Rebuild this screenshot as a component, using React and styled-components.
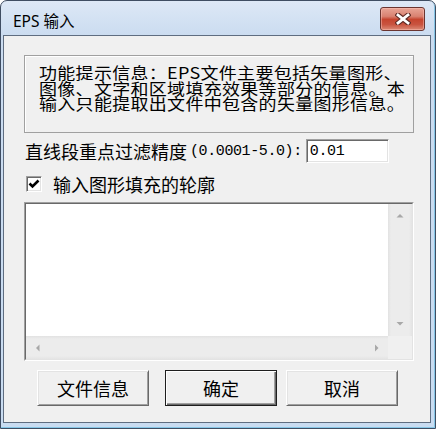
import React from "react";
import styled, { createGlobalStyle } from "styled-components";

const Global = createGlobalStyle`
  html, body { margin: 0; padding: 0; background: #ffffff; }
  body { font-family: "Noto Sans CJK SC", "Noto Sans", sans-serif; color: #000; }
`;

const Window = styled.div`
  box-sizing: border-box;
  width: 436px;
  height: 429px;
  display: flex;
  flex-direction: column;
  padding: 0 4px 5px 2px;
  border: 1px solid #3f4d62;
  border-radius: 7px 7px 0 0;
  background: linear-gradient(to bottom, #dde8f6 0px, #cbdcf0 34px, #c9dcf1 100%);
  box-shadow: inset -1px -1px 0 #86c6e6;
`;

const TitleBar = styled.div`
  height: 34px;
  display: flex;
  align-items: flex-start;
  justify-content: space-between;
  padding: 0 6px 0 10px;
`;

const Title = styled.div`
  margin-top: 10px;
  font-family: "Noto Sans", "Noto Sans CJK SC", sans-serif;
  font-size: 15.5px;
  line-height: 20px;
  color: #000;
`;

const CloseButton = styled.div`
  box-sizing: border-box;
  margin-top: 6px;
  width: 45px;
  height: 24px;
  border: 1px solid #6a3530;
  border-radius: 3px;
  background: linear-gradient(
    to bottom,
    #e8a596 0%,
    #d98271 38%,
    #c6452f 52%,
    #c95440 75%,
    #dc8b77 100%
  );
  box-shadow: inset 0 0 0 1px rgba(255, 200, 190, 0.45);
  display: flex;
  align-items: center;
  justify-content: center;
`;

const Client = styled.div`
  flex: 1;
  display: flex;
  flex-direction: column;
  background: #f0f0f0;
  border: 1px solid #5f6d80;
`;

const InfoBox = styled.div`
  box-sizing: border-box;
  width: 390px;
  height: 78px;
  margin: 19px 0 0 20px;
  border: 1px solid #a0a0a0;
  box-shadow: inset 1px 1px 0 #ffffff;
  padding: 8px 0 0 14px;
`;

const InfoText = styled.div`
  transform: scaleY(0.86);
  transform-origin: 0 0;
`;

const InfoLine = styled.div`
  font-size: 18px;
  line-height: 18.5px;
  letter-spacing: 0.3px;
  white-space: nowrap;
`;

const FieldRow = styled.div`
  display: flex;
  align-items: center;
  height: 24px;
  margin: 6px 0 0 21px;
`;

const Label = styled.span`
  font-size: 18px;
  line-height: 20px;
  white-space: nowrap;
`;

const MonoText = styled.span`
  margin-left: 3px;
  font-family: "Liberation Mono", "DejaVu Sans Mono", monospace;
  font-size: 15px;
  letter-spacing: -0.4px;
  white-space: nowrap;
`;

const Edit = styled.input`
  box-sizing: border-box;
  margin-left: 4px;
  width: 83px;
  height: 24px;
  padding: 0 0 0 3px;
  border: 1px solid;
  border-color: #a0a0a0 #ffffff #ffffff #a0a0a0;
  box-shadow: inset 1px 1px 0 #696969, inset -1px -1px 0 #e3e3e3;
  background: #ffffff;
  font-family: "Liberation Mono", "DejaVu Sans Mono", monospace;
  font-size: 15px;
  letter-spacing: -0.4px;
  color: #000;
  outline: none;
`;

const CheckRow = styled.div`
  display: flex;
  align-items: center;
  height: 22px;
  margin: 10px 0 0 22px;
`;

const CheckBox = styled.div`
  box-sizing: border-box;
  width: 16px;
  height: 16px;
  border: 1px solid;
  border-color: #a0a0a0 #ffffff #ffffff #a0a0a0;
  box-shadow: inset 1px 1px 0 #696969, inset -1px -1px 0 #e3e3e3;
  background: #ffffff;
  display: flex;
  align-items: center;
  justify-content: center;
`;

const CheckLabel = styled.span`
  margin-left: 11px;
  font-size: 18px;
  line-height: 20px;
`;

const ListFrame = styled.div`
  box-sizing: border-box;
  width: 390px;
  height: 159px;
  margin: 7px 0 0 20px;
  border: 1px solid;
  border-color: #a0a0a0 #ffffff #ffffff #a0a0a0;
`;

const ListInner = styled.div`
  box-sizing: border-box;
  width: 100%;
  height: 100%;
  border: 1px solid;
  border-color: #696969 #e3e3e3 #e3e3e3 #696969;
  display: grid;
  grid-template-columns: 1fr 24px;
  grid-template-rows: 1fr 23px;
`;

const ListArea = styled.div`
  background: #ffffff;
`;

const VScroll = styled.div`
  display: flex;
  flex-direction: column;
  justify-content: space-between;
  background: linear-gradient(to right, #e2e2e2 0, #ececec 3px, #ececec 21px, #e4e4e4 100%);
`;

const HScroll = styled.div`
  display: flex;
  justify-content: space-between;
  background: linear-gradient(to bottom, #e2e2e2 0, #ececec 3px, #ececec 20px, #e4e4e4 100%);
`;

const ScrollArrow = styled.div`
  width: ${(p) => (p.$h ? "23px" : "24px")};
  height: ${(p) => (p.$h ? "23px" : "24px")};
  display: flex;
  align-items: center;
  justify-content: center;
`;

const Corner = styled.div`
  background: #f0f0f0;
`;

const ButtonRow = styled.div`
  display: flex;
  margin: 9px 0 0 33px;
`;

const Button = styled.div`
  box-sizing: border-box;
  width: 112px;
  height: 36px;
  margin-left: ${(p) => p.$gap || 0}px;
  display: flex;
  align-items: center;
  justify-content: center;
  background: #f0f0f0;
  font-size: 18px;
  border: 1px solid;
  border-color: ${(p) => (p.$default ? "#1e1e1e" : "#ffffff #696969 #696969 #ffffff")};
  box-shadow: ${(p) =>
    p.$default
      ? "inset 1px 1px 0 #ffffff, inset -1px -1px 0 #696969, inset -2px -2px 0 #a0a0a0"
      : "inset 1px 1px 0 #e3e3e3, inset -1px -1px 0 #a0a0a0"};
`;

const Arrow = ({ dir }) => {
  const paths = {
    up: "M0.5 4.5 L4 1 L7.5 4.5 Z",
    down: "M0.5 1 L4 4.5 L7.5 1 Z",
  };
  if (dir === "left" || dir === "right") {
    const d = dir === "left" ? "M4.5 0.5 L1 4 L4.5 7.5 Z" : "M1 0.5 L4.5 4 L1 7.5 Z";
    return (
      <svg width="6" height="8" viewBox="0 0 6 8">
        <path d={d} fill="#a8a8a8" />
      </svg>
    );
  }
  return (
    <svg width="8" height="6" viewBox="0 0 8 6">
      <path d={paths[dir]} fill="#a8a8a8" />
    </svg>
  );
};

export default function App() {
  return (
    <>
      <Global />
      <Window>
        <TitleBar>
          <Title>EPS 输入</Title>
          <CloseButton>
            <svg width="16" height="12" viewBox="0 0 16 12">
              <path d="M3 2 L13 10 M13 2 L3 10" stroke="#5e2a24" strokeWidth="5" strokeLinecap="square" />
              <path d="M3 2 L13 10 M13 2 L3 10" stroke="#ffffff" strokeWidth="2.8" strokeLinecap="square" />
            </svg>
          </CloseButton>
        </TitleBar>
        <Client>
          <InfoBox>
            <InfoText>
              <InfoLine>功能提示信息：EPS文件主要包括矢量图形、</InfoLine>
              <InfoLine>图像、文字和区域填充效果等部分的信息。本</InfoLine>
              <InfoLine>输入只能提取出文件中包含的矢量图形信息。</InfoLine>
            </InfoText>
          </InfoBox>
          <FieldRow>
            <Label>直线段重点过滤精度</Label>
            <MonoText>(0.0001-5.0):</MonoText>
            <Edit defaultValue="0.01" />
          </FieldRow>
          <CheckRow>
            <CheckBox>
              <svg width="12" height="12" viewBox="0 0 12 12">
                <path d="M1.5 5.5 L4.5 8.5 L10.5 2.5" stroke="#000" strokeWidth="2.6" fill="none" />
              </svg>
            </CheckBox>
            <CheckLabel>输入图形填充的轮廓</CheckLabel>
          </CheckRow>
          <ListFrame>
            <ListInner>
              <ListArea />
              <VScroll>
                <ScrollArrow>
                  <Arrow dir="up" />
                </ScrollArrow>
                <ScrollArrow>
                  <Arrow dir="down" />
                </ScrollArrow>
              </VScroll>
              <HScroll>
                <ScrollArrow $h>
                  <Arrow dir="left" />
                </ScrollArrow>
                <ScrollArrow $h>
                  <Arrow dir="right" />
                </ScrollArrow>
              </HScroll>
              <Corner />
            </ListInner>
          </ListFrame>
          <ButtonRow>
            <Button>文件信息</Button>
            <Button $gap={16} $default>确定</Button>
            <Button $gap={9}>取消</Button>
          </ButtonRow>
        </Client>
      </Window>
    </>
  );
}
